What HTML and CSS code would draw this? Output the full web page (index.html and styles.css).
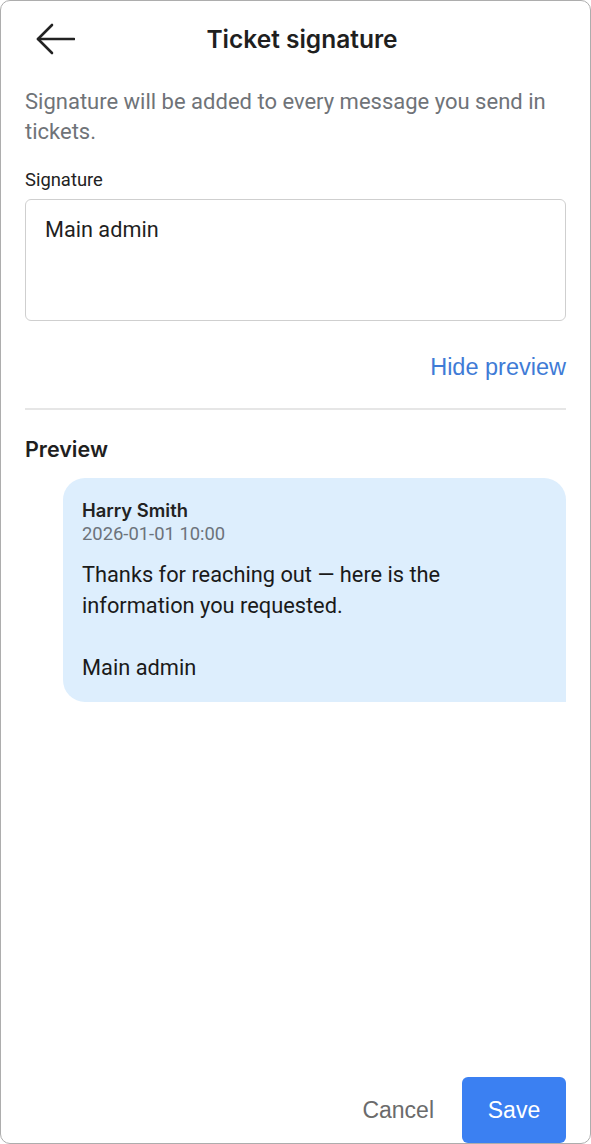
FILE: index.html
```html
<!DOCTYPE html>
<html lang="en">
<head>
  <meta charset="UTF-8">
  <title>Ticket signature</title>
  <link rel="stylesheet" href="styles.css">
</head>
<body>

<div class="frame">
  <header class="topbar">
    <a href="#" class="back" aria-label="Back">
      <svg width="40" height="32" viewBox="0 0 40 32" fill="none" stroke="#222" stroke-width="2.6" stroke-linecap="round" stroke-linejoin="round">
        <path d="M39 16 H3"/>
        <path d="M17 2 L3 16 L17 30"/>
      </svg>
    </a>
    <h1>Ticket signature</h1>
    <span class="spacer"></span>
  </header>

  <div class="content">
    <p class="intro">Signature will be added to every message you send in tickets.</p>

    <label class="label" for="signature">Signature</label>
    <div class="field" id="signature">Main admin</div>

    <div class="toggle-row">
      <a href="#" class="toggle">Hide preview</a>
    </div>

    <hr class="divider">

    <h2 class="preview-title">Preview</h2>

    <!-- Preview bubble -->
    <div class="bubble">
      <div class="author">Harry Smith</div>
      <div class="date">2026-01-01 10:00</div>
      <p class="message">Thanks for reaching out — here is the information you requested.<br><br>Main admin</p>
    </div>
  </div>

  <footer class="actions">
    <button class="cancel">Cancel</button>
    <button class="save">Save</button>
  </footer>
</div>

</body>
</html>
```

FILE: styles.css
```css
body {
  font-family: Roboto, "Liberation Sans", sans-serif;
  margin: 0;
  color: #1f1f1f;
  background: #fff;
}
.frame {
  height: 1144px;
  box-sizing: border-box;
  border: 1px solid #adadad;
  border-radius: 10px;
  display: flex;
  flex-direction: column;
  overflow: hidden;
}
.topbar {
  height: 75px;
  display: flex;
  align-items: center;
  padding: 0 24px 0 34px;
}
.back {
  display: flex;
  width: 40px;
}
.topbar h1 {
  flex: 1;
  margin: 0;
  text-align: center;
  font-family: Inter, "Liberation Sans", sans-serif;
  font-weight: 600;
  font-size: 24.5px;
  color: #1f1f1f;
}
.spacer {
  width: 37px;
}
.content {
  padding: 0 24px;
}
.intro {
  margin: 11px 0 0;
  font-size: 22px;
  line-height: 30px;
  color: #6f7378;
}
.label {
  display: block;
  margin-top: 21px;
  font-size: 18.4px;
  line-height: 24px;
  color: #222;
}
.field {
  margin-top: 7px;
  height: 122px;
  box-sizing: border-box;
  border: 1px solid #cfcfcf;
  border-radius: 6px;
  padding: 16px 19px;
  font-size: 21.7px;
  line-height: 28px;
  color: #1f1f1f;
}
.toggle-row {
  margin-top: 32px;
  text-align: right;
  line-height: 28px;
}
.toggle {
  font-family: "Liberation Sans", Arial, sans-serif;
  font-size: 23.5px;
  color: #3f7bd6;
  text-decoration: none;
}
.divider {
  margin: 24px 0 0;
  border: none;
  border-top: 2px solid #e6e6e6;
}
.preview-title {
  margin: 25px 0 0;
  font-family: Inter, "Liberation Sans", sans-serif;
  font-weight: 600;
  font-size: 21.5px;
  line-height: 28px;
  color: #1f1f1f;
}
.bubble {
  margin: 15px 0 0 38px;
  background: #ddeefd;
  border-radius: 22px 22px 0 22px;
  padding: 21px 19px 19px;
}
.author {
  font-family: Inter, "Liberation Sans", sans-serif;
  font-weight: 600;
  font-size: 18.4px;
  line-height: 22px;
  color: #222;
}
.date {
  margin-top: 2px;
  font-size: 18.4px;
  line-height: 22px;
  color: #6c737b;
}
.message {
  margin: 14px 0 0;
  font-size: 21.8px;
  line-height: 31px;
  color: #1a1a1a;
}
.actions {
  margin-top: auto;
  display: flex;
  justify-content: flex-end;
  align-items: flex-start;
  padding: 0 24px 0 0;
}
.actions button {
  font-family: "Liberation Sans", Arial, sans-serif;
  font-size: 23px;
  border: none;
  cursor: pointer;
}
.cancel {
  background: none;
  color: #6b6b6b;
  margin-right: 22px;
  height: 66px;
}
.save {
  background: #3b80f2;
  color: #fff;
  width: 104px;
  height: 66px;
  border-radius: 6px;
}
```
